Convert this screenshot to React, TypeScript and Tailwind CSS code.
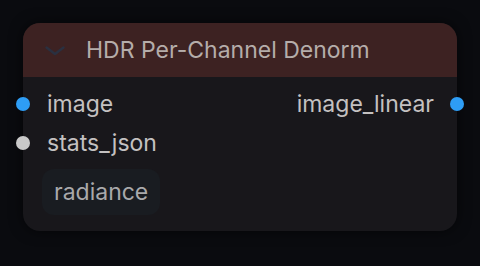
export default function App() {
  return (
    <div className="w-[480px] h-[266px] bg-[#0a0b0f] pt-[23px] pl-[23px] font-['Inter',sans-serif]">
      <div className="relative w-[434px] h-[208px] rounded-[17px] bg-[#18171b] shadow-[0_0_14px_rgba(0,0,0,0.6)]">
        <div className="h-[54px] rounded-t-[17px] bg-[#3d2222] flex items-center pl-[21px]">
          <svg width="22" height="22" viewBox="0 0 22 22" fill="none" stroke="#2a3040" strokeWidth="2.4" strokeLinecap="round" strokeLinejoin="round">
            <path d="M2.5 8.5l8.5 6.5 8.5-6.5" />
          </svg>
          <span className="ml-[20px] text-[23px] text-[#b5adaa] leading-none">HDR Per-Channel Denorm</span>
        </div>
        <div className="flex justify-between items-center h-[40px] mt-[7px]">
          <div className="flex items-center">
            <span className="w-[14px] h-[14px] rounded-full bg-[#2e9df5] -ml-[7px]" />
            <span className="ml-[17px] text-[23px] text-[#c4c1c1]">image</span>
          </div>
          <div className="flex items-center">
            <span className="text-[23px] text-[#c4c1c1]">image_linear</span>
            <span className="w-[14px] h-[14px] rounded-full bg-[#2e9df5] ml-[16px] -mr-[7px]" />
          </div>
        </div>
        <div className="flex items-center h-[38px]">
          <span className="w-[14px] h-[14px] rounded-full bg-[#c9c9c9] -ml-[7px]" />
          <span className="ml-[17px] text-[23px] text-[#c4c1c1]">stats_json</span>
        </div>
        <div className="ml-[19px] mt-[7px] w-[118px] h-[46px] rounded-[12px] bg-[#191c21] flex items-center pl-[12px]">
          <span className="text-[23px] text-[#a9a9ab]">radiance</span>
        </div>
      </div>
    </div>
  );
}
